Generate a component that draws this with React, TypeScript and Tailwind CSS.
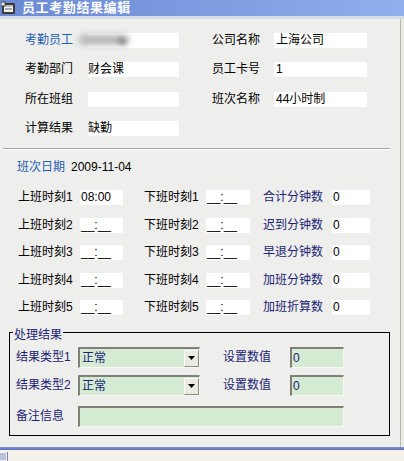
import React from "react";

const FONT = "font-['Liberation_Sans','Noto_Sans_CJK_SC',sans-serif]";

function WhiteBox({ className, children }: { className: string; children?: React.ReactNode }) {
  return (
    <div className={`h-[15px] bg-white flex items-center leading-[15px] text-black ${className}`}>{children}</div>
  );
}

function SunkenBox({ className, children }: { className: string; children?: React.ReactNode }) {
  return (
    <div
      className={`h-[21px] bg-[#d5ebd3] border-t-2 border-l-2 border-b border-r border-t-[#808078] border-l-[#808078] border-b-[#f8f8f4] border-r-[#f8f8f4] flex items-center leading-[15px] text-[#1b2474] ${className}`}
    >
      {children}
    </div>
  );
}

function Select({ value }: { value: string }) {
  return (
    <SunkenBox className="w-[122px] pl-[2px]">
      <span className="flex-1">{value}</span>
      <div className="w-[15px] h-[17px] bg-[#ece9e0] border border-t-[#ffffff] border-l-[#ffffff] border-b-[#8a8a84] border-r-[#8a8a84] flex items-center justify-center">
        <svg width="7" height="4" viewBox="0 0 7 4">
          <polygon points="0,0 7,0 3.5,4" fill="#000" />
        </svg>
      </div>
    </SunkenBox>
  );
}

const topRows: [string, string, string | null, string | null, boolean][] = [
  ["考勤员工", "", "公司名称", "上海公司", true],
  ["考勤部门", "财会课", "员工卡号", "1", false],
  ["所在班组", "", "班次名称", "44小时制", false],
  ["计算结果", "缺勤", null, null, false],
];

const timeRows: [string, string, string, string, string, string][] = [
  ["上班时刻1", "08:00", "下班时刻1", "__:__", "合计分钟数", "0"],
  ["上班时刻2", "__:__", "下班时刻2", "__:__", "迟到分钟数", "0"],
  ["上班时刻3", "__:__", "下班时刻3", "__:__", "早退分钟数", "0"],
  ["上班时刻4", "__:__", "下班时刻4", "__:__", "加班分钟数", "0"],
  ["上班时刻5", "__:__", "下班时刻5", "__:__", "加班折算数", "0"],
];

const topGaps = ["mt-[14px]", "mt-[14px]", "mt-[15px]", "mt-[14px]"];
const timeGaps = ["mt-[15px]", "mt-[13px]", "mt-[12px]", "mt-[13px]", "mt-[12px]"];

export default function App() {
  return (
    <div className={`w-[404px] h-[461px] bg-[#eeeeec] flex flex-col overflow-hidden text-[12px] ${FONT}`}>
      {/* title bar */}
      <div className="h-[16px] bg-gradient-to-r from-[#6b89d3] to-[#8fafee] flex items-center">
        <svg width="16" height="14" viewBox="0 0 16 14" className="ml-[1px]">
          <rect x="1" y="2" width="13" height="11" rx="1" fill="#3a3a3a" />
          <rect x="3" y="4" width="9" height="7" fill="#f0f0f0" />
          <rect x="3" y="4" width="9" height="2" fill="#bfbfbf" />
          <line x1="4" y1="8" x2="11" y2="8" stroke="#666" strokeWidth="1" />
          <rect x="0" y="1" width="4" height="4" fill="#e8e8e8" stroke="#333" strokeWidth="0.8" />
        </svg>
        <span className="ml-[5px] text-white font-bold text-[13px] tracking-[0.6px] leading-[16px]">员工考勤结果编辑</span>
      </div>
      <div className="h-[3px] bg-[#d6dbe6]" />

      <div className="flex flex-1">
        <div className="w-[400px] flex flex-col">
          {/* employee info */}
          {topRows.map(([l1, v1, l2, v2, blur], i) => (
            <div key={l1} className={`flex items-center h-[15px] ${topGaps[i]}`}>
              <div className={`w-[88px] pl-[25px] leading-[15px] ${i === 0 ? "text-[#1f5fb0]" : "text-black"}`}>{l1}</div>
              <WhiteBox className="w-[91px] relative">
                {blur && (
                  <>
                    <div className="absolute left-[-9px] top-[2px] w-[50px] h-[10px] rounded-full bg-[#b4b4b4] blur-[3px]" />
                    <div className="absolute left-[30px] top-[5px] w-[8px] h-[6px] rounded-full bg-[#8c8c8c] blur-[2px]" />
                  </>
                )}
                {v1}
              </WhiteBox>
              {l2 && (
                <>
                  <div className="ml-[33px] w-[62px] leading-[15px] text-black">{l2}</div>
                  <WhiteBox className="w-[93px] pl-[2px]">{v2}</WhiteBox>
                </>
              )}
            </div>
          ))}

          {/* etched separator */}
          <div className="mt-[12px] ml-[3px] w-[387px] h-px bg-[#a4a4a0]" />
          <div className="ml-[3px] w-[387px] h-px bg-white" />

          <div className="mt-[10px] flex items-center h-[15px] leading-[15px]">
            <span className="ml-[17px] text-[#1f5fb0]">班次日期</span>
            <span className="ml-[6px] text-black">2009-11-04</span>
          </div>

          {/* clock times */}
          {timeRows.map(([a, av, b, bv, c, cv], i) => (
            <div key={a} className={`flex items-center h-[15px] ${timeGaps[i]}`}>
              <div className="w-[80px] pl-[18px] leading-[15px] text-black">{a}</div>
              <WhiteBox className="w-[43px] pl-[1px]">{av}</WhiteBox>
              <div className="ml-[21px] w-[62px] leading-[15px] text-black">{b}</div>
              <WhiteBox className="w-[44px] pl-[1px]">{bv}</WhiteBox>
              <div className="ml-[13px] w-[69px] leading-[15px] text-[#1b2474]">{c}</div>
              <WhiteBox className="w-[38px] pl-[1px]">{cv}</WhiteBox>
            </div>
          ))}

          {/* result group */}
          <div className="mt-[17px] ml-[9px] w-[381px] h-[104px] border border-black relative flex flex-col">
            <span className="absolute left-[3px] top-[-5px] px-[1px] bg-[#eeeeec] leading-[15px] text-[#1b2474]">处理结果</span>
            <div className="mt-[14px] flex items-center">
              <div className="w-[68px] pl-[6px] text-[#1b2474] leading-[15px]">结果类型1</div>
              <Select value="正常" />
              <div className="ml-[23px] w-[67px] text-[#1b2474] leading-[15px]">设置数值</div>
              <SunkenBox className="w-[54px] pl-[1px]">0</SunkenBox>
            </div>
            <div className="mt-[7px] flex items-center">
              <div className="w-[68px] pl-[6px] text-[#1b2474] leading-[15px]">结果类型2</div>
              <Select value="正常" />
              <div className="ml-[23px] w-[67px] text-[#1b2474] leading-[15px]">设置数值</div>
              <SunkenBox className="w-[54px] pl-[1px]">0</SunkenBox>
            </div>
            <div className="mt-[10px] flex items-center">
              <div className="w-[68px] pl-[6px] text-[#1b2474] leading-[15px]">备注信息</div>
              <SunkenBox className="w-[266px]" />
            </div>
          </div>
        </div>
        <div className="w-px bg-[#b8b8a8]" />
        <div className="w-[3px] bg-[#ecece6]" />
      </div>

      {/* frame edge and status strip */}
      <div className="h-[3px] bg-gradient-to-b from-[#8595cf] to-[#5a6bb8]" />
      <div className="h-[11px] bg-[#f4f1e8] flex items-start">
        <svg width="9" height="9" viewBox="0 0 9 9" className="mt-[2px]">
          <rect x="0" y="1" width="6" height="7" fill="#b9c3dd" />
          <rect x="7" y="0" width="1" height="9" fill="#7c86a8" />
        </svg>
      </div>
    </div>
  );
}
